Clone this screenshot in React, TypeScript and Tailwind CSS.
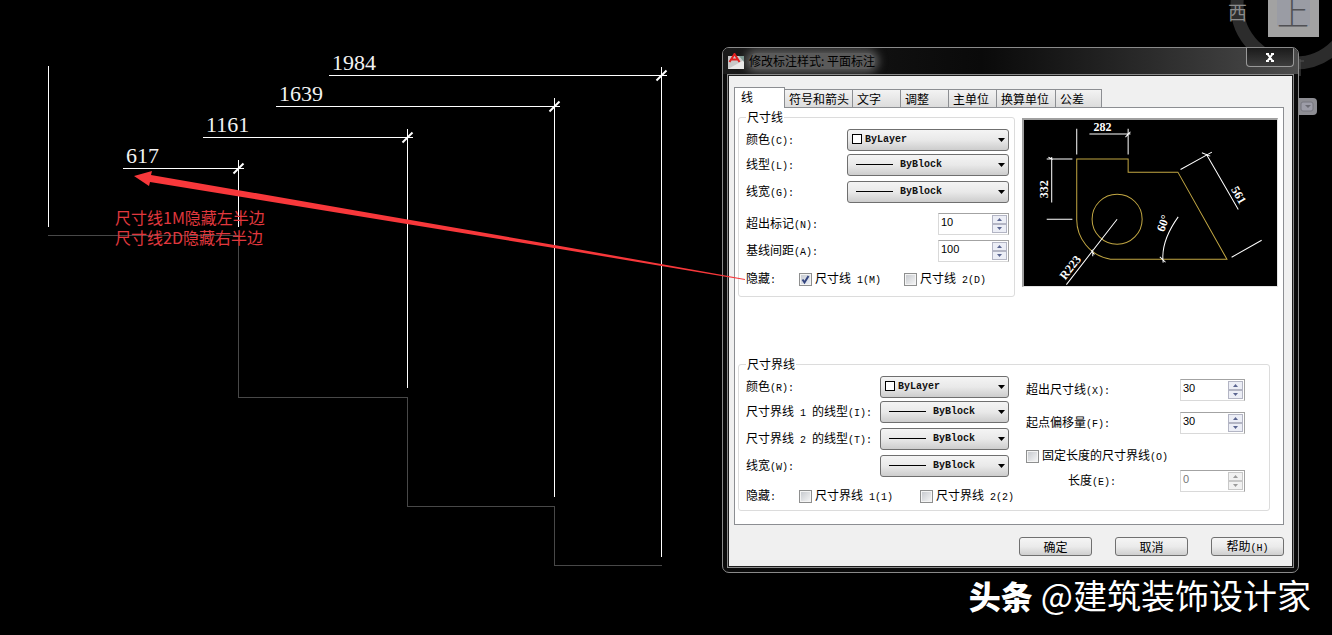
import React from "react";

// Latin runs are set in a half-width face beside the full-width characters
const latin = "font-['Liberation_Mono','Noto_Sans_CJK_SC',monospace] text-[10px]";

const Mixed = ({ text }: { text: string }) => (
  <span className="whitespace-pre">
    {text.split(/([\x20-\x7e]+)/).map((part, index) =>
      index % 2 ? (
        <span key={index} className={latin}>
          {part}
        </span>
      ) : (
        part
      )
    )}
  </span>
);

interface Dimension {
  value: string;
  from: number;
  to: number;
  y: number;
  end: number;
}

const dimensions: Dimension[] = [
  { value: "1984", from: 328, to: 661, y: 75, end: 556 },
  { value: "1639", from: 275, to: 554, y: 106, end: 496 },
  { value: "1161", from: 202, to: 407, y: 137, end: 387 },
  { value: "617", from: 122, to: 238, y: 168, end: 226 },
];

const Drawing = () => (
  <div className="absolute inset-0">
    <svg className="absolute inset-0 h-full w-full" shapeRendering="crispEdges">
      <path
        d="M48 235.5H238.5V397.5H407.5V506.5H554.5V565.5H662"
        fill="none"
        stroke="#484848"
      />
      <path d="M48.5 66V227" stroke="#fff" />
      {dimensions.map((d) => (
        <g key={d.value}>
          <g transform="translate(0.5 0.5)" stroke="#fff">
            <path d={`M${d.from} ${d.y}H${d.to + 5}M${d.to} ${d.y - 9}V${d.end}`} />
            <path
              d={`M${d.to - 5} ${d.y + 5}L${d.to + 5} ${d.y - 5}`}
              strokeWidth="2"
              shapeRendering="auto"
            />
          </g>
          <text
            x={d.from + 4}
            y={d.y - 5}
            fill="#f2f2f2"
            className="font-['Liberation_Serif',serif] text-[22px]"
          >
            {d.value}
          </text>
        </g>
      ))}
    </svg>
    <p className="absolute top-[207px] left-[115px] text-base leading-5 whitespace-nowrap text-[#e0383e]">
      尺寸线1M隐藏左半边
      <br />
      尺寸线2D隐藏右半边
    </p>
  </div>
);

const ViewCube = () => (
  <div className="absolute top-0 right-0 h-32 w-[110px] overflow-hidden">
    <svg className="absolute inset-0 h-full w-full">
      <circle cx="73" cy="5" r="58" fill="none" stroke="#2c2c2c" strokeWidth="13" />
      <rect x="46" y="-10" width="51" height="47" fill="#a2a2a2" />
      <rect x="55" y="-10" width="33" height="36" fill="#9a9ca4" />
      <path d="M78 59V76M78 61H82" stroke="#555" />
      <rect x="66" y="98" width="29" height="17" rx="4" fill="#8d8d93" />
      <rect x="79" y="102" width="12" height="9" rx="2" fill="#9d9da8" stroke="#77777f" />
      <path d="M83 105H89L86 108Z" fill="#6d6d75" />
    </svg>
    <span className="absolute top-[2px] left-1.5 text-[19px] leading-5 text-[#8b8b8b]">
      西
    </span>
    <span className="absolute top-[-7px] left-[55px] text-[32px] leading-9 font-light text-[#505054]">
      上
    </span>
  </div>
);

interface ComboProps {
  id: string;
  value: string;
  swatch?: boolean;
}

const Combo = ({ id, value, swatch }: ComboProps) => (
  <div className="relative h-[22px] w-full">
    <select
      id={id}
      className={`h-full w-full appearance-none rounded-[3px] border border-[#6f6f6f] bg-linear-to-b from-[#f4f4f4] via-[#e9e9e9] to-[#cdcdcd] font-['Liberation_Mono',monospace] text-[10px] font-bold text-[#111] ${
        swatch ? "pl-[17px]" : "pl-[52px]"
      }`}
    >
      <option>{value}</option>
    </select>
    <svg
      className="pointer-events-none absolute inset-0 h-full w-full"
      shapeRendering="crispEdges"
    >
      {swatch ? (
        <rect x="5.5" y="5.5" width="9" height="9" fill="#fff" stroke="#000" />
      ) : (
        <path d="M9 10.5H46" stroke="#000" />
      )}
    </svg>
    <svg
      className="pointer-events-none absolute top-[9px] right-1 h-1 w-[7px]"
      viewBox="0 0 7 4"
    >
      <path d="M0 0H7L3.5 4Z" fill="#000" />
    </svg>
  </div>
);

interface SpinnerProps {
  id: string;
  value: string;
  disabled?: boolean;
}

const Spinner = ({ id, value, disabled }: SpinnerProps) => {
  const arrow = disabled ? "#9a9a9a" : "#5a6590";
  const step = `flex h-[9px] w-[15px] items-center justify-center border ${
    disabled ? "border-[#c8c8c8] bg-[#f1f1f1]" : "border-[#b3b5c4] bg-[#eceef6]"
  }`;
  return (
    <div className="flex h-[22px] w-full border border-[#d9d9d9] border-t-[#a3a3a3] border-r-[#a3a3a3] bg-white">
      <input
        id={id}
        defaultValue={value}
        disabled={disabled}
        className="min-w-0 flex-1 bg-transparent pb-[3px] pl-0.5 font-['Liberation_Sans',sans-serif] text-[11px] text-black disabled:text-[#777]"
      />
      <div className="flex flex-col justify-between p-px">
        <button type="button" aria-label="增加" disabled={disabled} className={step}>
          <svg className="h-[3px] w-[5px]" viewBox="0 0 5 3">
            <path d="M0 3H5L2.5 0Z" fill={arrow} />
          </svg>
        </button>
        <button type="button" aria-label="减少" disabled={disabled} className={step}>
          <svg className="h-[3px] w-[5px]" viewBox="0 0 5 3">
            <path d="M0 0H5L2.5 3Z" fill={arrow} />
          </svg>
        </button>
      </div>
    </div>
  );
};

const Check = ({ text, checked }: { text: string; checked?: boolean }) => (
  <label className="flex items-center gap-[3px]">
    <span className="relative flex h-[13px] w-[13px]">
      <input
        type="checkbox"
        defaultChecked={checked}
        className="peer h-[13px] w-[13px] appearance-none border border-[#8e8f8f] bg-linear-to-br from-[#c4c7cc] to-[#f8f8f8] shadow-[inset_0_0_0_1px_#f4f4f4] checked:to-[#eef3fb]"
      />
      <svg
        className="pointer-events-none absolute inset-0 hidden h-full w-full peer-checked:block"
        viewBox="0 0 13 13"
      >
        <path d="M3.5 6.5L5.5 9.5L9.5 3" fill="none" stroke="#34457f" strokeWidth="2" />
      </svg>
    </span>
    <Mixed text={text} />
  </label>
);

interface FieldProps {
  id: string;
  label: string;
  width: string;
  className?: string;
  children: React.ReactNode;
}

const Field = ({ id, label, width, className = "", children }: FieldProps) => (
  <div className={`flex h-[22px] items-center justify-between ${className}`}>
    <label htmlFor={id}>
      <Mixed text={label} />
    </label>
    <div className={width}>{children}</div>
  </div>
);

const Preview = () => (
  <div className="mt-[7px] h-[169px] flex-1 border-t-2 border-r border-b border-l-2 border-[#a0a0a0] border-r-[#e3e3e3] border-b-[#e3e3e3] bg-black">
    <svg className="h-full w-full" viewBox="29 31 758 497" fill="none" strokeWidth="3">
      <g stroke="#c2a743">
        <path d="M187 325V148H341V187H490L637 448H288A121 121 0 0 1 187 325Z" />
        <circle cx="308" cy="328" r="75" />
      </g>
      <g stroke="#fff">
        <path d="M187 57V134M341 57V134M225 73H348M333 82L348 66" />
        <path d="M97 148H174M97 328H174M112 142V278M102 142L115 149" />
        <path d="M498 179L592 127M651 442L741 391M575 133L671 299M562 129L587 139" />
        <path d="M308 328L156 524M230 421L240 434M235 419V439" />
        <path d="M491 321Q438 395 446 458M436 441L453 457" />
      </g>
      <g
        fill="#fff"
        textAnchor="middle"
        className="font-['Liberation_Serif',serif] text-[36px] font-bold"
      >
        <text x="264" y="64">
          282
        </text>
        <text transform="translate(102 238) rotate(-90)">332</text>
        <text transform="translate(662 262) rotate(60)">561</text>
        <text transform="translate(457 344) rotate(-70)">60°</text>
        <text transform="translate(177 480) rotate(-52)">R223</text>
      </g>
    </svg>
  </div>
);

const tabs = [
  { name: "符号和箭头", width: "w-[68px]" },
  { name: "文字", width: "w-12" },
  { name: "调整", width: "w-12" },
  { name: "主单位", width: "w-12" },
  { name: "换算单位", width: "w-[59px]" },
  { name: "公差", width: "w-[46px]" },
];

const group = "min-w-0 rounded-[3px] border border-[#dcdcdc] pr-[5px] pl-[7px]";

const LinesPanel = () => (
  <div className="border border-[#8c8e92] bg-white pt-[2px] pr-[5px] pb-[13px] pl-[3px]">
    <div className="flex gap-[7px]">
      <fieldset className={`w-[277px] pt-[5px] pb-2 ${group}`}>
        <legend className="px-px leading-[14px]">尺寸线</legend>
        <Field id="dim-color" label="颜色(C):" width="w-[162px]">
          <Combo id="dim-color" value="ByLayer" swatch />
        </Field>
        <Field id="dim-type" label="线型(L):" width="w-[162px]" className="mt-[3px]">
          <Combo id="dim-type" value="ByBlock" />
        </Field>
        <Field id="dim-weight" label="线宽(G):" width="w-[162px]" className="mt-[5px]">
          <Combo id="dim-weight" value="ByBlock" />
        </Field>
        <Field id="dim-mark" label="超出标记(N):" width="w-[71px]" className="mt-[10px]">
          <Spinner id="dim-mark" value="10" />
        </Field>
        <Field id="dim-base" label="基线间距(A):" width="w-[71px]" className="mt-[5px]">
          <Spinner id="dim-base" value="100" />
        </Field>
        <div className="mt-[9px] flex items-center leading-[14px]">
          <span className="w-[53px]">
            <Mixed text="隐藏:" />
          </span>
          <span className="w-[105px]">
            <Check text="尺寸线 1(M)" checked />
          </span>
          <Check text="尺寸线 2(D)" />
        </div>
      </fieldset>
      <div className="flex flex-1 pt-px">
        <Preview />
      </div>
    </div>

    <fieldset className={`mt-[60px] mr-2 pt-[5px] pb-[5px] ${group}`}>
      <legend className="px-px leading-[14px]">尺寸界线</legend>
      <div className="flex">
        <div className="w-[263px]">
          <Field id="ext-color" label="颜色(R):" width="w-[129px]">
            <Combo id="ext-color" value="ByLayer" swatch />
          </Field>
          <Field
            id="ext-type1"
            label="尺寸界线 1 的线型(I):"
            width="w-[129px]"
            className="mt-[3px]"
          >
            <Combo id="ext-type1" value="ByBlock" />
          </Field>
          <Field
            id="ext-type2"
            label="尺寸界线 2 的线型(T):"
            width="w-[129px]"
            className="mt-[5px]"
          >
            <Combo id="ext-type2" value="ByBlock" />
          </Field>
          <Field id="ext-weight" label="线宽(W):" width="w-[129px]" className="mt-[5px]">
            <Combo id="ext-weight" value="ByBlock" />
          </Field>
          <div className="mt-[11px] flex items-center leading-[14px] whitespace-nowrap">
            <span className="w-[53px] shrink-0">
              <Mixed text="隐藏:" />
            </span>
            <span className="w-[121px] shrink-0">
              <Check text="尺寸界线 1(1)" />
            </span>
            <Check text="尺寸界线 2(2)" />
          </div>
        </div>

        <div className="ml-[17px] w-[219px] pt-[3px]">
          <Field id="ext-beyond" label="超出尺寸线(X):" width="w-[65px]">
            <Spinner id="ext-beyond" value="30" />
          </Field>
          <Field
            id="ext-offset"
            label="起点偏移量(F):"
            width="w-[65px]"
            className="mt-[11px]"
          >
            <Spinner id="ext-offset" value="30" />
          </Field>
          <div className="mt-[14px] leading-[14px]">
            <Check text="固定长度的尺寸界线(O)" />
          </div>
          <Field
            id="ext-length"
            label="长度(E):"
            width="w-[65px]"
            className="mt-[5px] pl-[42px]"
          >
            <Spinner id="ext-length" value="0" disabled />
          </Field>
        </div>
      </div>
    </fieldset>
  </div>
);

const Dialog = () => (
  <div
    role="dialog"
    aria-labelledby="dialog-title"
    className="absolute top-[47px] left-[722px] w-[577px] rounded-[7px] border border-[#8a8a8a] bg-[#0a0a0a] px-1 pb-1"
  >
    <header className="-mx-1 flex h-[26px] items-start justify-between overflow-hidden rounded-t-[6px] bg-linear-to-r from-[#1a1a1a] from-0% via-[#0a0a0a] via-45% to-[#4c4c4c] pl-[5px]">
      <div className="flex items-center gap-[5px] pt-[5px]">
        <svg className="relative h-4 w-4" viewBox="0 0 16 16">
          <rect x="0" y="3" width="16" height="13" fill="#c9c9c9" />
          <path d="M0 16L16 7V16Z" fill="#e9e9e9" />
          <path d="M11 3H16V9Z" fill="#7f9a93" />
          <path
            d="M1.5 9L6.5 1L11.5 9M3 6.5H10"
            fill="none"
            stroke="#e11f1f"
            strokeWidth="2"
          />
        </svg>
        <h1
          id="dialog-title"
          className="rounded-full bg-[#5a5a5a] text-xs leading-4 text-black shadow-[0_0_8px_4px_#5a5a5a]"
        >
          修改标注样式: 平面标注
        </h1>
      </div>
      <button
        type="button"
        aria-label="关闭"
        className="mr-1 flex h-[19px] w-12 items-center justify-center rounded-b-[4px] border border-t-0 border-[#999] bg-linear-to-b from-[#1b1b1b] to-[#3d3d3d]"
      >
        <svg className="h-[9px] w-[10px]" viewBox="0 0 10 9">
          <path
            d="M2.5 1L7.5 8M7.5 1L2.5 8M1 1H4M6 1H9M1 8H4M6 8H9"
            stroke="#fff"
            strokeWidth="2"
          />
        </svg>
      </button>
    </header>

    <div className="border border-[#8a8a8a] bg-[#f0f0f0]">
      <div className="border border-[#1c1c1c] pt-[11px] pr-2 pb-[10px] pl-[5px]">
        <div role="tablist" className="flex h-5 items-end">
          <button
            type="button"
            role="tab"
            aria-selected="true"
            className="relative z-10 -mb-px h-[21px] w-[51px] border border-b-0 border-[#8c8e92] bg-white pb-[2px] pl-1.5 text-left leading-4"
          >
            线
          </button>
          {tabs.map((tab) => (
            <button
              key={tab.name}
              type="button"
              role="tab"
              aria-selected="false"
              className={`h-[18px] border-t border-r border-[#8c8e92] bg-linear-to-b from-[#f3f3f3] to-[#dcdcdc] pl-1 text-left leading-4 whitespace-nowrap ${tab.width}`}
            >
              {tab.name}
            </button>
          ))}
        </div>

        <LinesPanel />

        <div className="mt-3 flex justify-end gap-[23px]">
          {["确定", "取消", "帮助(H)"].map((name) => (
            <button
              key={name}
              type="button"
              className="h-[19px] w-[73px] rounded-[3px] border border-[#707070] bg-linear-to-b from-[#f5f5f5] via-[#ebebeb] to-[#cfcfcf] leading-4"
            >
              <Mixed text={name} />
            </button>
          ))}
        </div>
      </div>
    </div>
  </div>
);

const App = () => {
  return (
    <main className="relative min-h-screen overflow-hidden bg-black font-['Noto_Sans_CJK_SC',sans-serif] text-xs text-black">
      <Drawing />
      <ViewCube />
      <Dialog />

      {/* Callout from the hide option back to its dimension line */}
      <svg className="pointer-events-none absolute inset-0 h-full w-full">
        <path
          d="M134 176L152 171L151 175L370 213L560 246L745 279V280L560 249L370 218L150 182L149 186Z"
          fill="#f8383b"
        />
      </svg>

      <p className="absolute right-[21px] bottom-5 flex items-center gap-2 text-[34px] leading-10 text-white">
        <b className="text-[32px] font-black">头条</b>
        <span>@建筑装饰设计家</span>
      </p>
    </main>
  );
};

export default App;
